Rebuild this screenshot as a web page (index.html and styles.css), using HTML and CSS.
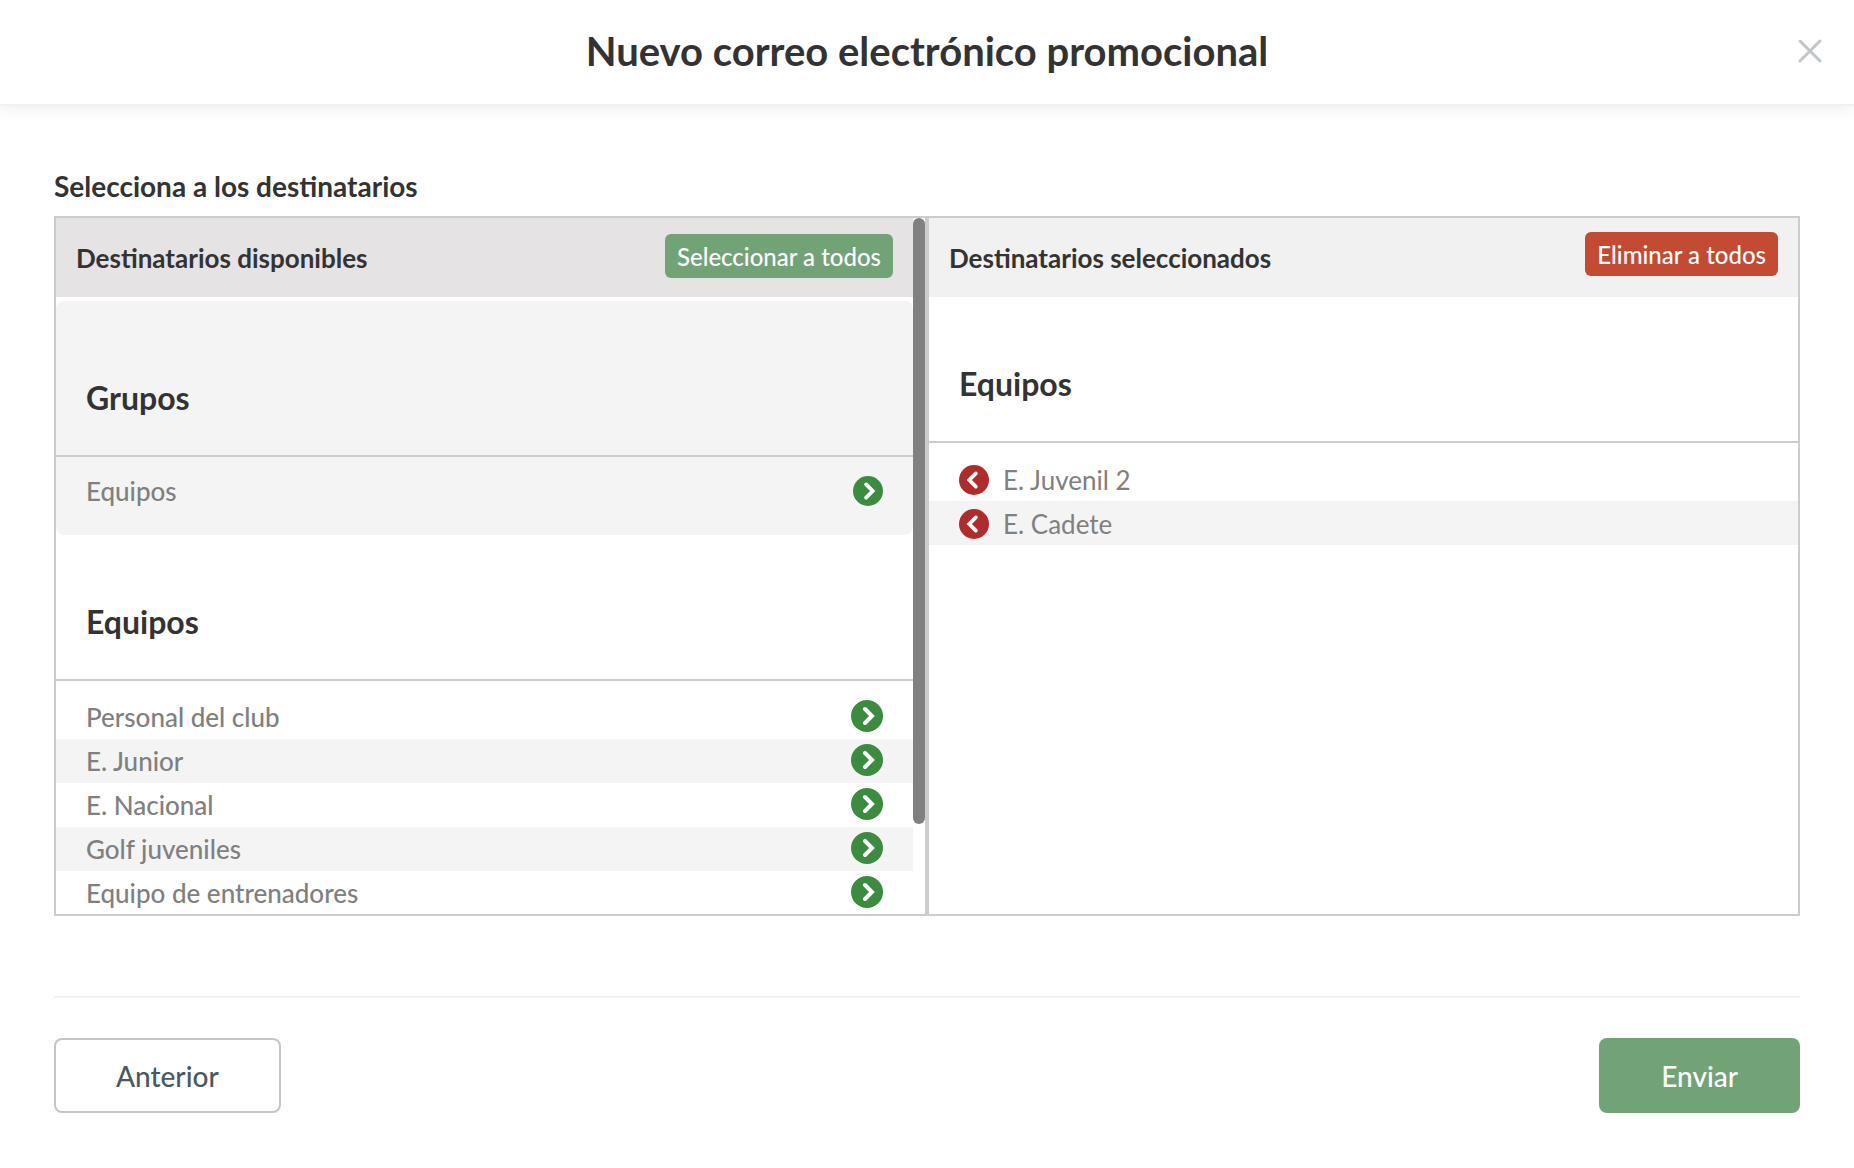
FILE: index.html
```html
<!DOCTYPE html>
<html lang="es">
<head>
<meta charset="utf-8">
<meta name="viewport" content="width=device-width, initial-scale=1">
<title>Nuevo correo electrónico promocional</title>
<link rel="stylesheet" href="styles.css">
</head>
<body>
<svg class="sprite" aria-hidden="true">
  <symbol id="chevron-right" viewBox="0 0 32 32">
    <circle cx="16" cy="16" r="16"/>
    <path d="M14 9l7 7-7 7" fill="none" stroke="#fff" stroke-width="4" stroke-linecap="round" stroke-linejoin="miter"/>
  </symbol>
  <symbol id="chevron-left" viewBox="0 0 32 32">
    <circle cx="16" cy="16" r="16"/>
    <path d="M18 9l-7 7 7 7" fill="none" stroke="#fff" stroke-width="4" stroke-linecap="round" stroke-linejoin="miter"/>
  </symbol>
</svg>

<header class="modal-header">
  <h1 class="modal-title">Nuevo correo electrónico promocional</h1>
  <button class="close" type="button" aria-label="Cerrar">
    <svg width="24" height="24" viewBox="0 0 24 24"><path d="M2 2l20 20M22 2L2 22" fill="none" stroke="#c1c6c9" stroke-width="3" stroke-linecap="round"/></svg>
  </button>
</header>

<main class="content">
  <h2 class="label">Selecciona a los destinatarios</h2>

  <div class="picker">
    <section class="pane">
      <div class="pane-body">
        <div class="pane-header pane-header-available">
          <h3 class="pane-title">Destinatarios disponibles</h3>
          <button class="btn-small btn-green" type="button">Seleccionar a todos</button>
        </div>
        <div class="group group-shaded">
          <h4 class="group-title">Grupos</h4>
          <ul class="list">
            <li class="row"><span>Equipos</span><button class="icon-btn add" type="button" aria-label="Añadir Equipos"><svg><use href="#chevron-right"/></svg></button></li>
          </ul>
        </div>
        <div class="group">
          <h4 class="group-title">Equipos</h4>
          <ul class="list list-large">
            <li class="row"><span>Personal del club</span><button class="icon-btn add" type="button" aria-label="Añadir Personal del club"><svg><use href="#chevron-right"/></svg></button></li>
            <li class="row"><span>E. Junior</span><button class="icon-btn add" type="button" aria-label="Añadir E. Junior"><svg><use href="#chevron-right"/></svg></button></li>
            <li class="row"><span>E. Nacional</span><button class="icon-btn add" type="button" aria-label="Añadir E. Nacional"><svg><use href="#chevron-right"/></svg></button></li>
            <li class="row"><span>Golf juveniles</span><button class="icon-btn add" type="button" aria-label="Añadir Golf juveniles"><svg><use href="#chevron-right"/></svg></button></li>
            <li class="row"><span>Equipo de entrenadores</span><button class="icon-btn add" type="button" aria-label="Añadir Equipo de entrenadores"><svg><use href="#chevron-right"/></svg></button></li>
          </ul>
        </div>
      </div>
      <div class="scrollbar" aria-hidden="true"><div class="thumb"></div></div>
    </section>

    <section class="pane">
      <div class="pane-body">
        <div class="pane-header">
          <h3 class="pane-title">Destinatarios seleccionados</h3>
          <button class="btn-small btn-red" type="button">Eliminar a todos</button>
        </div>
        <div class="group">
          <h4 class="group-title">Equipos</h4>
          <ul class="list list-selected">
            <li class="row"><button class="icon-btn remove" type="button" aria-label="Quitar E. Juvenil 2"><svg><use href="#chevron-left"/></svg></button><span>E. Juvenil 2</span></li>
            <li class="row"><button class="icon-btn remove" type="button" aria-label="Quitar E. Cadete"><svg><use href="#chevron-left"/></svg></button><span>E. Cadete</span></li>
          </ul>
        </div>
      </div>
    </section>
  </div>

  <footer class="actions">
    <button class="btn btn-outline" type="button">Anterior</button>
    <button class="btn btn-green" type="button">Enviar</button>
  </footer>
</main>
</body>
</html>
```
FILE: styles.css
```css
* {
  box-sizing: border-box;
}

body {
  margin: 0;
  background: #fff;
  color: #333;
  font-family: Lato, "Open Sans", sans-serif;
  font-size: 26px;
}

h1, h2, h3, h4, ul {
  margin: 0;
  padding: 0;
}

button {
  padding: 0;
  border: 0;
  background: none;
  font-family: inherit;
  cursor: pointer;
}

.sprite {
  display: none;
}

.modal-header {
  display: grid;
  grid-template-columns: 1fr auto 1fr;
  align-items: center;
  height: 104px;
  padding: 0 32px 2px;
  box-shadow: 0 2px 0 #f0f0f5, 0 4px 16px rgba(0, 0, 0, 0.08);
}

.modal-title {
  grid-column: 2;
  font-size: 40px;
  line-height: 48px;
  font-weight: 700;
}

.close {
  display: flex;
  justify-self: end;
}

.content {
  padding: 64px 54px;
}

.label {
  font-size: 28px;
  line-height: 36px;
  font-weight: 700;
}

.picker {
  display: grid;
  grid-template-columns: 1fr 1fr;
  height: 700px;
  margin-top: 12px;
}

.pane {
  display: flex;
  min-width: 0;
  border: 2px solid #ccc;
  overflow: hidden;
}

.pane-body {
  flex: 1;
  min-width: 0;
}

.scrollbar {
  width: 12px;
}

.thumb {
  height: 87%;
  border-radius: 6px;
  background: #808080;
}

.pane-header {
  display: flex;
  justify-content: space-between;
  align-items: flex-start;
  height: 79px;
  padding: 14px 20px;
  background: #f1f1f1;
}

.pane-header-available {
  padding-top: 16px;
  background: #e5e3e4;
}

.pane-title {
  align-self: center;
  font-size: 26px;
  line-height: 32px;
  font-weight: 700;
}

.pane-header-available .pane-title {
  padding-bottom: 2px;
}

.btn-small {
  height: 44px;
  padding: 0 12px;
  border-radius: 6px;
  color: #fff;
  font-size: 24px;
  font-weight: 500;
}

.btn-green {
  background: #72a376;
}

.btn-red {
  background: #c44b33;
}

.group-shaded {
  margin-top: 4px;
  padding: 10px 0;
  border-radius: 8px;
  background: #f4f4f4;
}

.group-title {
  padding: 67px 30px 37px;
  border-bottom: 2px solid #ccc;
  font-size: 32px;
  line-height: 40px;
  font-weight: 700;
}

.list {
  padding: 12px 0;
  list-style: none;
}

.list-large,
.list-selected {
  padding: 14px 0;
}

.row {
  display: flex;
  align-items: center;
  justify-content: space-between;
  height: 44px;
  padding: 0 30px;
  color: #808080;
  font-weight: 500;
}

.row:nth-child(even) {
  background: #f4f4f4;
}

.list-large .row {
  padding-bottom: 2px;
}

.list-large span {
  padding-top: 2px;
}

.list-selected .row {
  justify-content: flex-start;
  gap: 14px;
  padding-top: 2px;
  font-weight: 400;
}

.icon-btn {
  width: 30px;
  height: 30px;
}

.list-large .icon-btn {
  width: 32px;
  height: 32px;
}

.icon-btn svg {
  display: block;
  width: 100%;
  height: 100%;
}

.add {
  fill: #3c8c40;
}

.remove {
  fill: #b02c2c;
}

.actions {
  display: flex;
  justify-content: space-between;
  margin-top: 80px;
  padding-top: 40px;
  border-top: 2px solid #f0f1f5;
}

.btn {
  height: 75px;
  padding: 0 62px;
  border-radius: 8px;
  color: #fff;
  font-size: 28px;
  font-weight: 500;
}

.btn-outline {
  padding: 0 60px;
  border: 2px solid #c1c6ca;
  color: #4a5960;
}
```
